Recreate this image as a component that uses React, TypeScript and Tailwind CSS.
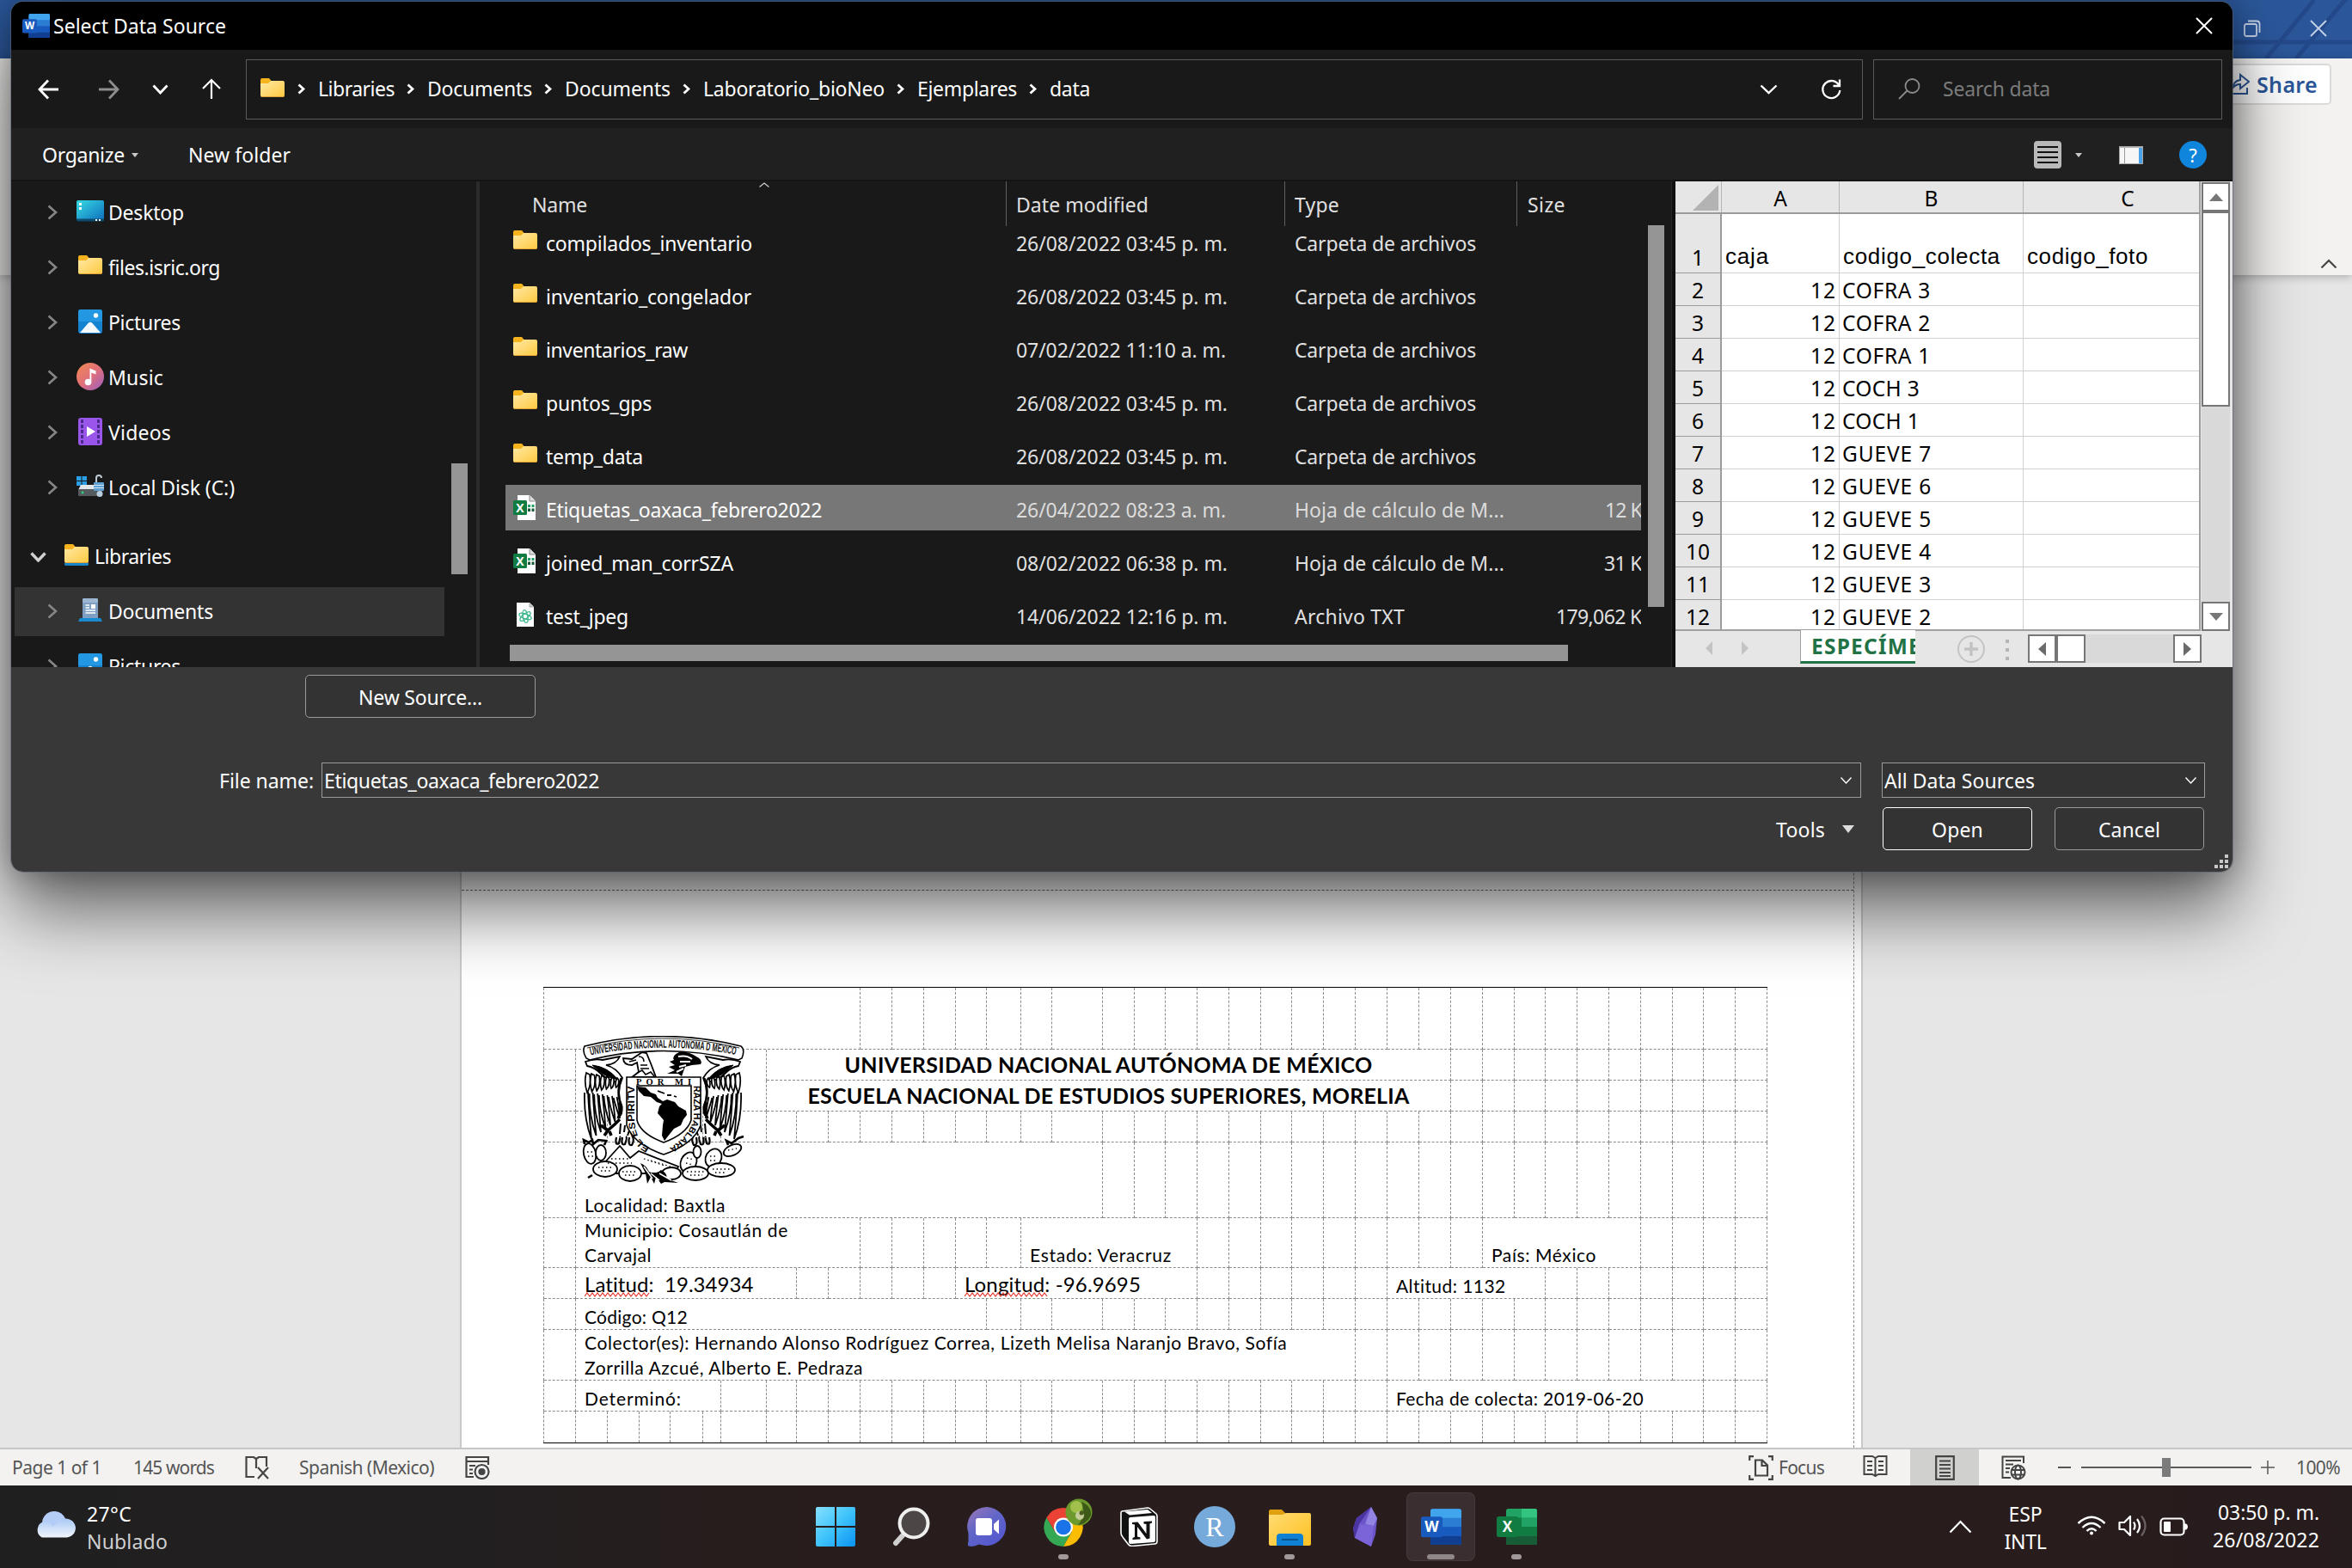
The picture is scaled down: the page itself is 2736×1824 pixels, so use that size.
import React, { useLayoutEffect, useRef, useState } from "react";

/* Text run whose tracking is adjusted so that it occupies `w` pixels. */
function Fit({ w, children, className = "" }: { w: number; children: string; className?: string }) {
  const ref = useRef<HTMLSpanElement>(null);
  const [ls, setLs] = useState(0);
  useLayoutEffect(() => {
    const el = ref.current;
    if (!el) return;
    setLs((w + 2 - el.getBoundingClientRect().width) / children.length);
  }, [w, children]);
  return (
    <span ref={ref} style={{ letterSpacing: ls }} className={"inline-block shrink-0 whitespace-pre " + className}>
      {children}
    </span>
  );
}

/* ---------- small icons ---------- */
const Chevron = ({ d, w, h, sw = 2.4, className = "" }: { d: "r" | "d" | "u"; w: number; h: number; sw?: number; className?: string }) => {
  const p = d === "r" ? `M1.5 1.5L${w - 2} ${h / 2}L1.5 ${h - 1.5}` : d === "d" ? `M1.5 1.5L${w / 2} ${h - 2}L${w - 1.5} 1.5` : `M1.5 ${h - 1.5}L${w / 2} 2L${w - 1.5} ${h - 1.5}`;
  return (
    <svg width={w} height={h} viewBox={`0 0 ${w} ${h}`} fill="none" stroke="currentColor" strokeWidth={sw} className={"shrink-0 " + className}>
      <path d={p} />
    </svg>
  );
};

const Folder = ({ lib = false }: { lib?: boolean }) => (
  <svg width="28" height="25" viewBox="0 0 28 25" className="shrink-0">
    <defs>
      <linearGradient id="fold" x1="0" y1="0" x2="1" y2="1">
        <stop offset="0" stopColor="#ffe9a6" />
        <stop offset="1" stopColor="#ffc93f" />
      </linearGradient>
    </defs>
    <path d="M0 2Q0 0 2 0H10L12.5 3L10 8H0Z" fill="#f5b31d" />
    <path d="M0 6H9L12 3H26Q28 3 28 5V20Q28 22 26 22H2Q0 22 0 20Z" fill="url(#fold)" />
    <path d="M1 21.5H27" stroke="#dfa431" strokeWidth="1" />
    {lib && <path d="M0 22H28V23.5Q28 25 26 25H2Q0 25 0 23.5Z" fill="#1a86c8" />}
  </svg>
);

const WordIcon = ({ s }: { s: number }) => (
  <svg width={s} height={s * 0.9} viewBox="0 0 47 42" className="shrink-0">
    <rect x="11" y="0" width="36" height="42" rx="2.5" fill="#2b7cd3" />
    <path d="M13.500 0H44.500Q47 0 47 2.500V10.500H11V2.500Q11 0 13.500 0Z" fill="#41a5ee" />
    <rect x="11" y="21" width="36" height="10.500" fill="#185abd" />
    <path d="M11 31.500H47V39.500Q47 42 44.500 42H13.500Q11 42 11 39.500Z" fill="#103f91" />
    <rect x="0" y="9" width="25" height="24" rx="2.500" fill="#185abd" />
    <text x="12.500" y="27" textAnchor="middle" fontFamily="Open Sans" fontWeight="700" fontSize="17" fill="#fff">W</text>
  </svg>
);

const ExcelIcon = () => (
  <svg width="47" height="42" viewBox="0 0 47 42">
    <rect x="11" y="0" width="36" height="42" rx="2.500" fill="#21a366" />
    <path d="M29 0H44.500Q47 0 47 2.500V10.500H29Z" fill="#33c481" />
    <rect x="29" y="10.500" width="18" height="10.500" fill="#21a366" />
    <path d="M11 10.500H29V21H11Z" fill="#107c41" />
    <path d="M11 21H47V31.500H11Z" fill="#107c41" />
    <path d="M11 31.500H47V39.500Q47 42 44.500 42H13.500Q11 42 11 39.500Z" fill="#185c37" />
    <rect x="0" y="9" width="25" height="24" rx="2.500" fill="#107c41" />
    <text x="12.500" y="27" textAnchor="middle" fontFamily="Open Sans" fontWeight="700" fontSize="17" fill="#fff">X</text>
  </svg>
);

const ExcelFile = () => (
  <svg width="28" height="30" viewBox="0 0 28 30" className="shrink-0">
    <path d="M5 0H19L26 7V29H5Z" fill="#fff" />
    <path d="M19 0V7H26" fill="#ddd" stroke="#8a8a8a" strokeWidth="1" />
    <path d="M17 11h3v3h-3zM21.500 11h3v3h-3z" fill="#21a366" />
    <path d="M17 15.500h3v3.500h-3zM21.500 15.500h3v3.500h-3z" fill="#185c37" />
    <rect x="0" y="6" width="16" height="17" rx="1.500" fill="#107c41" />
    <text x="8" y="19.500" textAnchor="middle" fontFamily="Open Sans" fontWeight="700" fontSize="14" fill="#fff">X</text>
  </svg>
);

const TxtFile = () => (
  <svg width="28" height="30" viewBox="0 0 28 30" className="shrink-0">
    <path d="M4 1H19L24 6V29H4Z" fill="#fdfdfd" />
    <path d="M19 1V6H24" fill="#ccc" stroke="#999" strokeWidth=".8" />
    <g fill="none" stroke="#3bb58c" strokeWidth="1.300">
      <ellipse cx="14" cy="17" rx="7.500" ry="2.800" transform="rotate(20 14 17)" />
      <ellipse cx="14" cy="17" rx="7.500" ry="2.800" transform="rotate(80 14 17)" />
      <ellipse cx="14" cy="17" rx="7.500" ry="2.800" transform="rotate(140 14 17)" />
    </g>
  </svg>
);

const PicturesIcon = () => (
  <svg width="28" height="28" viewBox="0 0 28 28">
    <rect width="28" height="28" rx="3" fill="#1583cf" />
    <path d="M0 3Q0 0 3 0H25Q28 0 28 3V14H0Z" fill="#2497e2" />
    <circle cx="20.500" cy="7" r="2.700" fill="#fff" />
    <path d="M2 27L12 15.500Q14 14 16 15.500L26 27Z" fill="#f4faff" />
  </svg>
);

const treeIcons: Record<string, React.ReactNode> = {
  desktop: (
    <svg width="32" height="25" viewBox="0 0 32 25">
      <defs>
        <linearGradient id="dk" x1="0" y1="0" x2="1" y2="1">
          <stop offset="0" stopColor="#35dbe2" />
          <stop offset="1" stopColor="#0f6cbd" />
        </linearGradient>
      </defs>
      <rect width="32" height="24" rx="2" fill="url(#dk)" />
      <path d="M0 21.500H32V22.500Q32 24.500 30 24.500H2Q0 24.500 0 22.500Z" fill="#0c4a6e" />
      <path d="M3 3h3v3h-3zM3 8h3v3h-3zM22 22h2v2h-2zM26 22h2v2h-2z" fill="#fff" />
    </svg>
  ),
  folder: <Folder />,
  pictures: <PicturesIcon />,
  music: (
    <svg width="32" height="32" viewBox="0 0 32 32">
      <defs>
        <linearGradient id="mu" x1="0" y1="0" x2="1" y2="1">
          <stop offset="0" stopColor="#f2894f" />
          <stop offset=".5" stopColor="#e0707a" />
          <stop offset="1" stopColor="#9a5fc4" />
        </linearGradient>
      </defs>
      <circle cx="16" cy="16" r="16" fill="url(#mu)" />
      <circle cx="13.500" cy="22.500" r="3.800" fill="#fff" />
      <path d="M15.500 22.500V6.500L22.500 9.500V13.500L17.300 11.500V22.500Z" fill="#fff" />
    </svg>
  ),
  videos: (
    <svg width="28" height="32" viewBox="0 0 28 32">
      <rect width="28" height="32" rx="3" fill="#9a55ea" />
      <path d="M3 2h3v4H3zM3 8h3v4H3zM3 14h3v4H3zM3 20h3v4H3zM3 26h3v4H3zM22 2h3v4h-3zM22 8h3v4h-3zM22 14h3v4h-3zM22 20h3v4h-3zM22 26h3v4h-3z" fill="#4b2a8c" />
      <path d="M10 10L20 16L10 22Z" fill="#fff" />
    </svg>
  ),
  disk: (
    <svg width="32" height="27" viewBox="0 0 32 27">
      <path d="M0 2h5.500v5H0zM6.500 2H12v5H6.500zM0 8h5.500v5H0zM6.500 8H12v5H6.500z" fill="#2b9fe6" />
      <path d="M5 12H27L30 18H2Z" fill="#e4e7ea" />
      <rect x="2" y="17" width="28" height="8" rx="1" fill="#555a5f" />
      <circle cx="7" cy="21" r="1.400" fill="#2ed573" />
      <path d="M23 9V4Q23 1 26 1T29 4" fill="none" stroke="#bfc9d2" strokeWidth="2" />
      <rect x="20" y="9" width="12" height="10" rx="1" fill="#5fa0cf" />
      <path d="M20 12.500H32M20 15.500H32" stroke="#cfe4f4" strokeWidth="1" />
      <circle cx="27" cy="22.500" r="3.500" fill="#b9cfdf" />
    </svg>
  ),
  lib: <Folder lib />,
  docs: (
    <svg width="28" height="27" viewBox="0 0 28 27">
      <rect x="5" y="0" width="18" height="25" rx="1.500" fill="#7f9fc2" />
      <rect x="5" y="0" width="18" height="5" rx="1.500" fill="#9db6d1" />
      <path d="M8.500 8H13M8.500 11H13M8.500 14H20M8.500 17H20" stroke="#fff" strokeWidth="1.400" />
      <rect x="15" y="7" width="5" height="5" fill="#fff" />
      <path d="M2 23H26L28 27H0Z" fill="#1a8ad0" />
    </svg>
  ),
};

const tree: { t: string; w: number; i: string; top?: boolean; sel?: boolean }[] = [
  { t: "Desktop", w: 86, i: "desktop" },
  { t: "files.isric.org", w: 128, i: "folder" },
  { t: "Pictures", w: 82, i: "pictures" },
  { t: "Music", w: 62, i: "music" },
  { t: "Videos", w: 71, i: "videos" },
  { t: "Local Disk (C:)", w: 145, i: "disk" },
  { t: "Libraries", w: 87, i: "lib", top: true },
  { t: "Documents", w: 120, i: "docs", sel: true },
  { t: "Pictures", w: 82, i: "pictures" },
];

const files = [
  { n: "compilados_inventario", w: 238, d: "26/08/2022 03:45 p. m.", t: "Carpeta de archivos", tw: 209, s: "", k: "f" },
  { n: "inventario_congelador", w: 237, d: "26/08/2022 03:45 p. m.", t: "Carpeta de archivos", tw: 209, s: "", k: "f" },
  { n: "inventarios_raw", w: 163, d: "07/02/2022 11:10 a. m.", t: "Carpeta de archivos", tw: 209, s: "", k: "f" },
  { n: "puntos_gps", w: 121, d: "26/08/2022 03:45 p. m.", t: "Carpeta de archivos", tw: 209, s: "", k: "f" },
  { n: "temp_data", w: 111, d: "26/08/2022 03:45 p. m.", t: "Carpeta de archivos", tw: 209, s: "", k: "f" },
  { n: "Etiquetas_oaxaca_febrero2022", w: 319, d: "26/04/2022 08:23 a. m.", t: "Hoja de cálculo de M...", tw: 242, s: "12 KB", sw: 55, k: "x", sel: true },
  { n: "joined_man_corrSZA", w: 216, d: "08/02/2022 06:38 p. m.", t: "Hoja de cálculo de M...", tw: 242, s: "31 KB", sw: 56, k: "x" },
  { n: "test_jpeg", w: 94, d: "14/06/2022 12:16 p. m.", t: "Archivo TXT", tw: 126, s: "179,062 KB", sw: 112, k: "t" },
];

const crumbs: [string, number][] = [
  ["Libraries", 88],
  ["Documents", 121],
  ["Documents", 122],
  ["Laboratorio_bioNeo", 210],
  ["Ejemplares", 115],
  ["data", 46],
];

const sheet: [string, number][] = [
  ["COFRA 3", 101],
  ["COFRA 2", 101],
  ["COFRA 1", 101],
  ["COCH 3", 88],
  ["COCH 1", 88],
  ["GUEVE 7", 102],
  ["GUEVE 6", 102],
  ["GUEVE 5", 102],
  ["GUEVE 4", 102],
  ["GUEVE 3", 102],
  ["GUEVE 2", 102],
];

const Tri = ({ d, w, h, className = "" }: { d: "u" | "d" | "l" | "r"; w: number; h: number; className?: string }) => {
  const p = { u: `M0 ${h}H${w}L${w / 2} 0Z`, d: `M0 0H${w}L${w / 2} ${h}Z`, l: `M${w} 0V${h}L0 ${h / 2}Z`, r: `M0 0V${h}L${w} ${h / 2}Z` }[d];
  return (
    <svg width={w} height={h} viewBox={`0 0 ${w} ${h}`} className={"shrink-0 " + className}>
      <path d={p} fill="currentColor" />
    </svg>
  );
};

/* ---------- spreadsheet preview ---------- */
function SheetPreview() {
  return (
    <div className="w-[648px] shrink-0 bg-[#e6e6e6] text-black flex flex-col text-[24.500px]">
      <div className="flex h-[523px]">
        <div className="w-[611px] shrink-0 flex flex-col overflow-hidden border-r-2 border-b-2 border-[#a0a0a0] bg-white leading-none">
          <div className="flex h-[38px] shrink-0 bg-[#e6e6e6] border-b-2 border-[#9b9b9b]">
            <div className="w-[54px] shrink-0 border-r border-[#b5b5b5] flex justify-end items-end pr-[3px] pb-[2px]">
              <svg width="30" height="30" viewBox="0 0 30 30"><path d="M30 0V30H0Z" fill="#b3b3b3" /></svg>
            </div>
            <div className="w-[137px] shrink-0 border-r border-[#b5b5b5] flex items-center justify-center pt-1">A</div>
            <div className="w-[214px] shrink-0 border-r border-[#b5b5b5] flex items-center justify-center pt-1">B</div>
            <div className="w-[242px] shrink-0 flex items-center justify-center pt-1">C</div>
          </div>
          <div className="flex h-[69px] shrink-0">
            <div className="w-[54px] shrink-0 bg-[#e6e6e6] border-r-2 border-b border-[#9b9b9b] flex items-end justify-center pb-[4px] leading-[26px]">1</div>
            <div className="w-[137px] shrink-0 border-r border-b border-[#d0d0d0] pl-[4px] flex items-end pb-[5px] leading-[28px] text-[26px] font-['Liberation_Sans']"><Fit w={49}>caja</Fit></div>
            <div className="w-[214px] shrink-0 border-r border-b border-[#d0d0d0] pl-[4px] flex items-end pb-[5px] leading-[28px] text-[26px] font-['Liberation_Sans']"><Fit w={181}>codigo_colecta</Fit></div>
            <div className="flex-1 border-b border-[#d0d0d0] pl-[4px] flex items-end pb-[5px] leading-[28px] text-[26px] font-['Liberation_Sans']"><Fit w={139}>codigo_foto</Fit></div>
          </div>
          {sheet.map(([t, w], i) => (
            <div key={i} className="flex h-[38px] shrink-0 leading-none">
              <div className="w-[54px] shrink-0 bg-[#e6e6e6] border-r-2 border-b border-[#9b9b9b] flex items-center justify-center pt-1">{i + 2}</div>
              <div className="w-[137px] shrink-0 border-r border-b border-[#d0d0d0] flex items-center justify-end pr-[3px] pt-1"><Fit w={28}>12</Fit></div>
              <div className="w-[214px] shrink-0 border-r border-b border-[#d0d0d0] flex items-center pl-[3px] pt-1"><Fit w={w}>{t}</Fit></div>
              <div className="flex-1 border-b border-[#d0d0d0]" />
            </div>
          ))}
        </div>
        <div className="w-[33px] shrink-0 ml-px pt-px flex flex-col bg-[#d9d9d9]">
          <div className="h-[34px] border-2 border-[#767676] bg-white flex items-center justify-center text-[#767676]"><Tri d="u" w={16} h={9} /></div>
          <div className="h-[227px] border-2 border-[#767676] bg-white" />
          <div className="mt-auto h-[34px] border-2 border-[#767676] bg-white flex items-center justify-center text-[#767676]"><Tri d="d" w={16} h={9} /></div>
        </div>
      </div>
      <div className="flex h-[42px] pl-[35px]">
        <Tri d="l" w={8} h={16} className="text-[#c3c3c3] mt-3" />
        <Tri d="r" w={8} h={16} className="text-[#c3c3c3] mt-3 ml-[34px]" />
        <div className="ml-[60px] w-[134px] h-[39px] -mt-px shrink-0 bg-white border-l border-b-[3px] border-l-[#a0a0a0] border-b-[#217346] overflow-hidden pl-3 leading-[37px] font-bold text-[#217346]">
          <Fit w={147}>ESPECÍMEN</Fit>
        </div>
        <svg width="34" height="34" viewBox="0 0 34 34" fill="none" stroke="#c3c3c3" className="ml-[48px] mt-1 shrink-0">
          <circle cx="17" cy="17" r="15" strokeWidth="2" />
          <path d="M17 9V25M9 17H25" strokeWidth="3.500" />
        </svg>
        <div className="ml-[23px] mt-[10px] flex flex-col gap-[6px] shrink-0">
          <i className="size-1 bg-[#b5b5b5]" /><i className="size-1 bg-[#b5b5b5]" /><i className="size-1 bg-[#b5b5b5]" />
        </div>
        <div className="ml-[22px] mt-1 w-[202px] h-[33px] bg-[#d9d9d9] flex shrink-0 text-[#6a6a6a]">
          <div className="w-[33px] border-2 border-[#767676] bg-white flex items-center justify-center"><Tri d="l" w={9} h={16} /></div>
          <div className="w-[34px] border-2 border-[#767676] bg-white" />
          <div className="ml-auto w-[33px] border-2 border-[#767676] bg-white flex items-center justify-center"><Tri d="r" w={9} h={16} /></div>
        </div>
      </div>
    </div>
  );
}

/* ---------- file picker dialog ---------- */
function Dialog() {
  return (
    <div className="absolute left-[13px] top-[2px] w-[2584px] h-[1012px] rounded-[14px] shadow-[0_0_0_1px_rgba(90,100,115,0.6),0_0_36px_rgba(0,0,0,0.3),0_44px_84px_rgba(0,0,0,0.58)]">
      <div className="size-full rounded-[14px] overflow-hidden bg-[#383838] flex flex-col text-white text-[23px] leading-none">
        <div className="h-[56px] shrink-0 bg-black flex items-center pl-[13px]">
          <WordIcon s={32} />
          <Fit w={199} className="ml-[4px]">Select Data Source</Fit>
          <svg width="20" height="20" viewBox="0 0 20 20" stroke="#fff" strokeWidth="2" className="ml-auto mr-[23px]"><path d="M1 1L19 19M19 1L1 19" /></svg>
        </div>
        <div className="h-[91px] shrink-0 bg-[#191919] flex items-center pl-[31px]">
          <svg width="25" height="24" viewBox="0 0 25 24" fill="none" stroke="#fff" strokeWidth="2.800"><path d="M24 12H2M12 1.500L2 12L12 22.500" /></svg>
          <svg width="25" height="24" viewBox="0 0 25 24" fill="none" stroke="#8e8e8e" strokeWidth="2.800" className="ml-[45px]"><path d="M1 12H23M13 1.500L23 12L13 22.500" /></svg>
          <Chevron d="d" w={19} h={12} sw={2.8} className="ml-[38px]" />
          <svg width="22" height="25" viewBox="0 0 22 25" fill="none" stroke="#fff" strokeWidth="2.200" className="ml-[39px]"><path d="M11 24V2M1 12L11 2L21 12" /></svg>
          <div className="ml-[29px] w-[1881px] h-[70px] border border-[#5a5a5a] flex items-center pl-4 shrink-0">
            <Folder />
            {crumbs.map(([t, w], i) => (
              <React.Fragment key={i}>
                <Chevron d="r" w={9} h={13} sw={2.8} className={i ? "ml-[14px] mr-[15px]" : "ml-[15px] mr-[15px]"} />
                <Fit w={w - 1}>{t}</Fit>
              </React.Fragment>
            ))}
            <Chevron d="d" w={21} h={12} sw={2.4} className="ml-auto" />
            <svg width="24" height="25" viewBox="0 0 24 25" fill="none" stroke="#fff" strokeWidth="2.300" className="ml-[50px] mr-[24px]"><path d="M21.500 9A10 10 0 1 0 22.300 14M22 1.500V9H14.500" /></svg>
          </div>
          <div className="ml-3 w-[406px] h-[70px] border border-[#5a5a5a] flex items-center pl-7 text-[#7b7b7b] shrink-0">
            <svg width="26" height="25" viewBox="0 0 26 25" fill="none" stroke="#8b8b8b" strokeWidth="1.800"><circle cx="16.500" cy="9" r="8" /><path d="M10.500 14.500L1 24" /></svg>
            <Fit w={123} className="ml-[26px]">Search data</Fit>
          </div>
        </div>
        <div className="h-[62px] shrink-0 bg-[#202020] border-b-2 border-[#151515] flex items-center pl-9 pt-[2px]">
          <Fit w={94}>Organize</Fit>
          <Tri d="d" w={8} h={5} className="ml-[8px] text-[#c8c8c8]" />
          <Fit w={117} className="ml-[58px]">New folder</Fit>
          <svg width="32" height="32" viewBox="0 0 32 32" className="ml-auto"><rect width="32" height="32" rx="4" fill="#b9b9b9" /><path d="M4 7H28M4 13H28M4 19H28M4 25H28" stroke="#111" strokeWidth="2.200" /></svg>
          <Tri d="d" w={8} h={5} className="ml-[16px] text-[#c8c8c8]" />
          <svg width="28" height="21" viewBox="0 0 28 21" className="ml-[43px]"><rect width="28" height="21" fill="#f6f6f6" /><path d="M0 0H28V2H0Z" fill="#b5b5b5" /><path d="M6.500 2V21" stroke="#9a9a9a" /><rect x="23" y="2" width="5" height="19" fill="#4aa3e8" /><path d="M.5 .5H27.500V20.500H.5Z" fill="none" stroke="#a9a9a9" /></svg>
          <div className="ml-[42px] mr-[30px] size-8 rounded-full bg-[#0f85dc] flex items-center justify-center text-[22px]">?</div>
        </div>
        <div className="h-[565px] shrink-0 flex bg-[#191919]">
          <div className="w-[545px] shrink-0 border-r-4 border-[#2b2b2b] overflow-hidden flex pl-1">
            <div className="w-[500px] shrink-0 pt-[5px] h-[565px] overflow-hidden">
              {tree.map((r, i) => (
                <div key={i} className={"h-16 pt-[3px] " + (r.top ? "mt-4" : "")}>
                  <div className={"h-[57px] flex items-center " + (r.sel ? "bg-[#333333]" : "")}>
                    {r.top ? (
                      <Chevron d="d" w={19} h={12} sw={3.4} className="ml-[18px] text-[#d0d0d0]" />
                    ) : (
                      <Chevron d="r" w={12} h={18} sw={2.6} className="ml-[38px] -mt-[2px] text-[#868686]" />
                    )}
                    <div className={"w-8 flex justify-center -mt-1 shrink-0 " + (r.top ? "ml-[19px]" : "ml-[22px]")}>{treeIcons[r.i]}</div>
                    <Fit w={r.w} className="ml-[5px]">{r.t}</Fit>
                  </div>
                </div>
              ))}
            </div>
            <div className="ml-2 mt-[328px] w-[19px] h-[129px] bg-[#959595]" />
          </div>
          <div className="w-[1386px] flex shrink-0">
            <div className="w-[1351px] shrink-0 pl-[30px] flex flex-col">
              <div className="h-[52px] flex shrink-0 text-[#e0e0e0] relative z-10 bg-[#191919]">
                <div className="w-[583px] flex items-center pl-[31px] border-r border-[#5f5f5f] pt-[2px] relative">
                  <Fit w={62}>Name</Fit>
                  <Chevron d="u" w={14} h={8} sw={1.2} className="absolute left-[294px] top-0 text-[#cfcfcf]" />
                </div>
                <div className="w-[324px] flex items-center pl-[11px] border-r border-[#5f5f5f] pt-[2px]"><Fit w={152}>Date modified</Fit></div>
                <div className="w-[270px] flex items-center pl-[11px] border-r border-[#5f5f5f] pt-[2px]"><Fit w={50}>Type</Fit></div>
                <div className="flex items-center pl-[12px] pt-[2px]"><Fit w={42}>Size</Fit></div>
              </div>
              <div className="h-[479px] overflow-hidden shrink-0">
                <div className="-mt-[11px] w-[1321px]">
                  {files.map((f, i) => (
                    <div key={i} className="h-[62px] pt-[2px]">
                      <div className={"h-[53px] flex items-center overflow-hidden pt-[5px] " + (f.sel ? "bg-[#777777] text-[#dcdcdc]" : "text-[#e0e0e0]")}>
                        <div className="ml-[9px] w-7 -mt-[5px] shrink-0">{f.k === "f" ? <Folder /> : f.k === "x" ? <ExcelFile /> : <TxtFile />}</div>
                        <div className="w-[556px] shrink-0 pl-[10px] text-white"><Fit w={f.w}>{f.n}</Fit></div>
                        <div className="w-[324px] shrink-0 pl-[1px]"><Fit w={f.d.includes("a.") ? 242 : 244}>{f.d}</Fit></div>
                        <div className="w-[270px] shrink-0 pl-[1px]"><Fit w={f.tw}>{f.t}</Fit></div>
                        <div className="w-[149px] shrink-0 flex justify-end">{f.s && <Fit w={f.sw!}>{f.s}</Fit>}</div>
                      </div>
                    </div>
                  ))}
                </div>
              </div>
              <div className="h-[19px] shrink-0 mt-[8px] ml-[5px] w-[1231px] bg-[#959595]" />
            </div>
            <div className="mt-[51px] ml-[8px] w-[19px] h-[444px] bg-[#959595]" />
          </div>
          <div className="w-[5px] bg-[#101010] shrink-0 border-l border-[#262626]" />
          <SheetPreview />
        </div>
        <div className="flex-1 flex flex-col">
          <div className="ml-[342px] mt-[9px] w-[268px] h-[50px] shrink-0 rounded-[5px] border-[1.500px] border-[#9a9a9a] bg-[#333] flex items-center justify-center pt-[2px]"><Fit w={142}>New Source...</Fit></div>
          <div className="mt-[52px] flex items-center h-[41px] shrink-0">
            <Fit w={108} className="ml-[242px] mt-[2px]">File name:</Fit>
            <div className="ml-[9px] w-[1791px] h-[41px] border border-[#9b9b9b] flex items-center pl-[2px] pr-[9px]">
              <Fit w={318} className="mt-[2px]">Etiquetas_oaxaca_febrero2022</Fit>
              <Chevron d="d" w={15} h={10} sw={1.4} className="ml-auto" />
            </div>
            <div className="ml-[24px] w-[376px] h-[41px] border border-[#9b9b9b] bg-[#333] flex items-center pl-[2px] pr-[8px]">
              <Fit w={173} className="mt-[2px]">All Data Sources</Fit>
              <Chevron d="d" w={15} h={10} sw={1.4} className="ml-auto" />
            </div>
          </div>
          <div className="mt-[11px] flex items-center h-[50px] shrink-0 pl-[2053px]">
            <Fit w={55} className="mt-[3px]">Tools</Fit>
            <Tri d="d" w={14} h={9} className="ml-[20px] text-[#dcdcdc]" />
            <div className="ml-[33px] w-[174px] h-[50px] shrink-0 rounded-[5px] border-[1.500px] border-white bg-[#333] flex items-center justify-center pt-[2px]"><Fit w={58}>Open</Fit></div>
            <div className="ml-[26px] w-[174px] h-[50px] shrink-0 rounded-[5px] border border-[#9b9b9b] bg-[#333] flex items-center justify-center pt-[2px]"><Fit w={70}>Cancel</Fit></div>
          </div>
          <svg width="17" height="17" viewBox="0 0 17 17" className="ml-auto mr-1 mt-[5px]" fill="#c8c8c8"><path d="M12 0h4v4h-4zM12 6h4v4h-4zM6 6h4v4H6zM12 12h4v4h-4zM6 12h4v4H6zM0 12h4v4H0z" /></svg>
        </div>
      </div>
    </div>
  );
}

/* ---------- document ---------- */
const X = [632, 669, 706, 743, 779, 817, 838, 891, 926, 963, 1000, 1037, 1074, 1111, 1147, 1187, 1223, 1282, 1319, 1355, 1392, 1429, 1466, 1502, 1539, 1576, 1613, 1650, 1687, 1724, 1761, 1797, 1834, 1871, 1908, 1945, 1981, 2018, 2055];

type Span = { a: number; b: number; c?: React.ReactNode; open?: boolean; mid?: boolean };
const rows: { h: number; s: Span[] }[] = [
  { h: 72, s: [{ a: 0, b: 10 }] },
  { h: 36, s: [{ a: 1, b: 7, open: true }, { a: 7, b: 28, mid: true, c: <Fit w={612}>UNIVERSIDAD NACIONAL AUTÓNOMA DE MÉXICO</Fit> }] },
  { h: 36, s: [{ a: 1, b: 7 }, { a: 7, b: 28, mid: true, c: <Fit w={698}>ESCUELA NACIONAL DE ESTUDIOS SUPERIORES, MORELIA</Fit> }] },
  { h: 36, s: [] },
  { h: 88, s: [{ a: 1, b: 17, c: <Fit w={162}>Localidad: Baxtla</Fit> }] },
  {
    h: 58,
    s: [
      { a: 1, b: 10, c: <div className="flex flex-col items-start"><Fit w={235}>Municipio: Cosautlán de</Fit><Fit w={76}>Carvajal</Fit></div> },
      { a: 15, b: 20, c: <Fit w={163}>Estado: Veracruz</Fit> },
      { a: 29, b: 34, c: <Fit w={120}>País: México</Fit> },
    ],
  },
  {
    h: 36,
    s: [
      { a: 1, b: 8, c: <div className="text-[24px] flex relative mb-[2px]"><Fit w={195}>{"Latitud:  19.34934"}</Fit><Wave w={77} /></div> },
      { a: 13, b: 20, c: <div className="text-[24px] flex relative mb-[2px]"><Fit w={203}>Longitud: -96.9695</Fit><Wave w={97} /></div> },
      { a: 26, b: 31, c: <Fit w={126}>Altitud: 1132</Fit> },
    ],
  },
  { h: 36, s: [{ a: 1, b: 14, c: <Fit w={118}>Código: Q12</Fit> }] },
  { h: 59, s: [{ a: 1, b: 25, c: <div className="flex flex-col items-start"><Fit w={815}>Colector(es): Hernando Alonso Rodríguez Correa, Lizeth Melisa Naranjo Bravo, Sofía</Fit><Fit w={322}>Zorrilla Azcué, Alberto E. Pedraza</Fit></div> }] },
  { h: 36, s: [{ a: 1, b: 6, c: <Fit w={111}>Determinó:</Fit> }, { a: 26, b: 36, c: <Fit w={286}>Fecha de colecta: 2019-06-20</Fit> }] },
  { h: 36, s: [] },
];

function Wave({ w }: { w: number }) {
  let d = "M0 5";
  for (let x = 3; x <= w; x += 3) d += `L${x} ${(x / 3) % 2 ? 1 : 5}`;
  return (
    <svg width={w} height="6" viewBox={`0 0 ${w} 6`} fill="none" stroke="#e2372e" strokeWidth="1.200" className="absolute left-0 -bottom-px">
      <path d={d} />
    </svg>
  );
}

function LabelTable() {
  return (
    <div className="w-[1424px] border-y border-black text-black font-['Lato',sans-serif]">
      {rows.map((r, ri) => {
        const cells: Span[] = [];
        for (let i = 0; i < X.length - 1; ) {
          const s = r.s.find((q) => q.a === i);
          cells.push(s ?? { a: i, b: i + 1 });
          i = s ? s.b : i + 1;
        }
        return (
          <div key={ri} className="flex border-l border-dashed border-[#8c8c8c]" style={{ height: r.h }}>
            {cells.map((c) => (
              <div
                key={c.a}
                style={{ width: X[c.b] - X[c.a] }}
                className={"shrink-0 border-r border-dashed border-[#8c8c8c] flex " + (ri < 10 && !c.open ? "border-b " : "") + (c.mid ? "items-center justify-center font-bold text-[25px] leading-none" : "items-end pl-[10px] text-[21px] leading-[29px]")}
              >
                {c.c}
              </div>
            ))}
          </div>
        );
      })}
    </div>
  );
}

/* University coat of arms */
function Crest() {
  const feathers = [0, 1, 2, 3, 4, 5, 6];
  const half = (
    <g stroke="#000" fill="none">
      <path d="M4 30Q14 26 24 28L44 24Q40 33 28 34Q40 37 47 49L44 54Q30 52 22 44Q14 36 6 35Z" fill="#fff" strokeWidth="1.800" />
      <path d="M12 34Q30 36 42 51Q28 48 20 41Z" fill="#000" />
      {feathers.map((i) => (
        <path key={i} d={`M${5 + i * 6} ${43 + i}Q${2 + i * 6} ${54} ${6 + i * 5.6} ${66 - i}Q${11 + i * 5.4} ${58} ${9 + i * 5.6} ${45 + i}Z`} strokeWidth="1.700" fill="#fff" />
      ))}
      {feathers.map((i) => (
        <path key={"b" + i} d={`M${3 + i * 5.6} ${66 + i}Q${2 + i * 6} ${96 - i * 3} ${11 + i * 5.5} ${120 - i * 4}Q${8 + i * 6} ${88} ${7 + i * 5.6} ${65 + i}`} strokeWidth="1.800" />
      ))}
      <path d="M47 50Q40 66 47 82Q48 94 41 96Q46 84 42 70Q41 58 45 49Z" fill="#000" />
      <path d="M22 104L30 110L26 116M30 110L38 103L44 97M32 111L34 116" strokeWidth="3.500" />
      <path d="M40 118Q38 128 43 125Q45 116 44 118M47 118Q45 128 50 126Q53 118 51 117M55 118Q53 128 58 127Q61 122 59 117" strokeWidth="2.200" />
      <path d="M45 102L44 114M50 104L49 112M55 110L53 116" strokeWidth="2" />
    </g>
  );
  return (
    <svg width="190" height="174" viewBox="0 0 190 174" className="block">
      <rect x="3" y="20" width="183" height="68" fill="#fff" />
      {half}
      <g transform="translate(188 0) scale(-1 1)">{half}</g>
      {/* bird heads */}
      <path d="M70 19L58 27L48 26Q48 34 58 34L64 31L66 42L58 48H86L80 32L75 20Z" fill="#fff" stroke="#000" strokeWidth="1.800" />
      <path d="M55 30L63 28M66 24Q72 24 72 30M68 34H76M68 38H78M64 43L70 40L74 45L80 42L84 47" stroke="#000" strokeWidth="1.600" fill="none" />
      <path d="M113 19Q104 23 107 28L102 30L108 34L101 36L108 40L99 44H112L116 47L120 36L128 34L138 33Q141 28 133 24Q124 18 113 19Z" fill="#000" />
      <path d="M112 24Q122 22 128 27M114 30L126 30M113 36L121 34M110 42L118 38" stroke="#fff" strokeWidth="2" fill="none" />
      {/* banner */}
      <path d="M3 12Q94 -11 185 12Q190 16 186 26L182 28Q94 7 9 28L5 26Q0 18 3 12Z" fill="#fff" stroke="#000" strokeWidth="1.600" />
      <path d="M6 14Q94 -8 183 14" stroke="#000" strokeWidth=".8" fill="none" />
      <path id="arc" d="M10 22.500Q94 5 181 22.500" fill="none" />
      <text fontFamily="Liberation Sans" fontSize="13" fontWeight="700" fill="#111"><textPath href="#arc" textLength="170" lengthAdjust="spacingAndGlyphs">UNIVERSIDAD NACIONAL AUTONOMA D MEXICO</textPath></text>
      {/* shield */}
      <path d="M52 48H138V104Q130 126 95 138Q60 126 52 104Z" fill="#fff" stroke="#000" strokeWidth="1.600" />
      <path d="M64 58H127V98Q122 114 95 124Q68 114 64 98Z" fill="#fff" stroke="#000" strokeWidth="1.600" />
      <text x="95" y="56.500" textAnchor="middle" textLength="64" fontFamily="Liberation Serif" fontWeight="700" fontSize="10.500">POR MI</text>
      <path id="sl" d="M79 130Q62 121 61.500 100V54" fill="none" />
      <path id="sr" d="M129.500 58V98Q124 118 96 134" fill="none" />
      <text fontFamily="Liberation Sans" fontWeight="700" fontSize="10.500"><textPath href="#sl" textLength="78" lengthAdjust="spacingAndGlyphs">EL ESPIRITV</textPath></text>
      <text fontFamily="Liberation Sans" fontWeight="700" fontSize="10" transform="translate(0 0)"><textPath href="#sr" textLength="84" lengthAdjust="spacingAndGlyphs">RAZA HABLARA</textPath></text>
      {/* map */}
      <path d="M64 59L74 60L80 66L86 68L88 72L94 76L99 74L108 77L112 82L121 87L122 92L118 97L115 104L107 108L103 113L99 118L96 122L93 116L94 104L95 98L88 90L90 82L93 79L87 77L80 71L72 70L66 64Z" fill="#000" />
      <path d="M88 64L96 67M99 69L104 69M107 70L110 71" stroke="#000" strokeWidth="1.800" />
      {/* cactus and mountains */}
      <g fill="#fff" stroke="#000" strokeWidth="1.800">
        <path d="M24 150L44 128L56 142L66 134L112 152L108 160H24Z" />
        <ellipse cx="9" cy="137" rx="7" ry="12" transform="rotate(-12 9 137)" />
        <ellipse cx="22" cy="136" rx="6" ry="9" />
        <ellipse cx="27" cy="155" rx="14" ry="9" />
        <ellipse cx="56" cy="160" rx="13" ry="9" />
        <ellipse cx="104" cy="160" rx="11" ry="7" />
        <ellipse cx="124" cy="147" rx="9" ry="12" transform="rotate(25 124 147)" />
        <ellipse cx="134" cy="135" rx="4.500" ry="7" />
        <ellipse cx="132" cy="160" rx="15" ry="8" />
        <ellipse cx="153" cy="142" rx="9" ry="11" transform="rotate(30 153 142)" />
        <ellipse cx="162" cy="156" rx="16" ry="8" />
        <ellipse cx="175" cy="133" rx="11" ry="6" transform="rotate(-25 175 133)" />
        <path d="M3 126L2 121L8 124L12 121L13 126L19 121L28 122L26 127M12 162L7 165M170 127L168 122L174 125L182 119L188 117" fill="none" strokeWidth="2.600" />
      </g>
      <g stroke="#000" strokeWidth="1.300" strokeDasharray="1.500 3" fill="none">
        <path d="M34 143H56M30 148H58M80 145L106 153M72 143L96 151M19 153H36M22 157H34M47 158H64M50 162H62M122 142L130 144M121 148L129 150M122 158H142M126 162H140M152 155H172M155 159H168M149 140H158M149 145H156M170 133L180 131M6 135H12M7 140H13" />
      </g>
      <path d="M68 148Q74 150 78 158Q86 162 92 156Q100 160 98 166L112 171L96 170L92 172L86 164L84 172L80 164L76 172L74 160Z" fill="#000" />
      <path d="M72 152L82 166M90 160L104 168M80 160L90 168" stroke="#fff" strokeWidth="1.500" />
    </svg>
  );
}

/* ---------- taskbar ---------- */
function Slot({ w, children, dot }: { w: number; children: React.ReactNode; dot?: "s" | "l" }) {
  return (
    <div style={{ width: w }} className={"h-[80px] shrink-0 flex flex-col items-center relative rounded-lg " + (dot === "l" ? "bg-[#3a2e30] shadow-[inset_0_0_0_1px_#45393b]" : "")}>
      <div className="h-[80px] flex items-center">{children}</div>
      {dot && <i className={"absolute bottom-[2px] h-[6px] rounded-full " + (dot === "l" ? "w-8 bg-[#8f8788]" : "w-3 bg-[#a09899]")} />}
    </div>
  );
}

function Taskbar() {
  return (
    <div className="h-24 shrink-0 flex items-start pt-2 text-white text-[23px] leading-[32px] bg-[linear-gradient(90deg,#201f20_0%,#221f20_20%,#281d1d_33%,#291c1c_70%,#271c1d_100%)]">
      <svg width="48" height="31" viewBox="0 0 48 31" className="ml-10 mt-[22px] shrink-0">
        <defs>
          <linearGradient id="cl" x1="0" y1="0" x2="0" y2="1"><stop offset="0" stopColor="#a9c8f5" /><stop offset="1" stopColor="#f0f5fc" /></linearGradient>
        </defs>
        <circle cx="23" cy="14" r="14" fill="#b3cdf6" />
        <path d="M11 12A10 10 0 0 0 9 30.500H38A11 11 0 1 0 30 11Q24 14 22 18Q18 12 11 12Z" fill="url(#cl)" />
      </svg>
      <div className="ml-[13px] mt-[9px] w-[739px] flex flex-col items-start">
        <Fit w={50}>27°C</Fit>
        <Fit w={92} className="text-[#cfcfcf]">Nublado</Fit>
      </div>
      <div className="ml-[92px] flex">
        <Slot w={80}>
          <svg width="46" height="46" viewBox="0 0 46 46">
            <defs><linearGradient id="wn" x1="0" y1="0" x2="1" y2="1"><stop offset="0" stopColor="#86e0ff" /><stop offset=".5" stopColor="#3fc3fb" /><stop offset="1" stopColor="#0a93f2" /></linearGradient></defs>
            <path d="M0 2Q0 0 2 0H22V22H0ZM24 0H44Q46 0 46 2V22H24ZM0 24H22V46H2Q0 46 0 44ZM24 24H46V44Q46 46 44 46H24Z" fill="url(#wn)" />
          </svg>
        </Slot>
        <Slot w={96}>
          <svg width="44" height="46" viewBox="0 0 44 46" fill="none">
            <path d="M13 32L4 42" stroke="#cfcfcf" strokeWidth="6" strokeLinecap="round" />
            <circle cx="25" cy="19" r="16.500" fill="#4d4647" stroke="#efefef" strokeWidth="4" />
          </svg>
        </Slot>
        <Slot w={80}>
          <svg width="46" height="46" viewBox="0 0 46 46">
            <defs><linearGradient id="ch" x1="0" y1="0" x2=".7" y2="1"><stop offset="0" stopColor="#9d77b6" /><stop offset=".5" stopColor="#6066c8" /><stop offset="1" stopColor="#5557cf" /></linearGradient></defs>
            <path d="M23 0A23 22.500 0 1 1 14 43.500Q7 47 2 45.500Q0 45 1.500 40V30A23 22.500 0 0 1 23 0Z" fill="url(#ch)" />
            <rect x="10" y="13" width="19" height="20" rx="3" fill="#fff" />
            <path d="M31 20L37 14.500V31.500L31 26Z" fill="#fff" />
          </svg>
        </Slot>
        <Slot w={98} dot="s">
          <svg width="58" height="56" viewBox="0 0 58 56" className="-mt-[11px] ml-[12px]">
            <g transform="translate(0 11)">
              <path d="M23 22.500L3.500 11.250A22.500 22.500 0 0 1 42.500 11.250Z" fill="#ea4335" />
              <path d="M3.500 11.250A22.500 22.500 0 0 0 23 45L32.700 28L23 22.500L13.300 28Z" fill="#34a853" />
              <path d="M42.500 11.250A22.500 22.500 0 0 1 23 45L32.700 28L30 12Z" fill="#fbbc04" />
              <path d="M3.500 11.250L13.300 28L23 12H42.500L23 5Z" fill="#ea4335" />
              <circle cx="23" cy="22.500" r="11" fill="#fff" /><circle cx="23" cy="22.500" r="8.800" fill="#1a73e8" />
            </g>
            <circle cx="41" cy="16" r="15.500" fill="#6d9a2c" />
            <circle cx="38" cy="10" r="7" fill="#a2c04c" /><path d="M44 4Q56 9 55 20Q50 30 40 31Q50 20 44 4Z" fill="#3d5a18" /><circle cx="42" cy="20" r="5" fill="#c4cc9a" /><circle cx="44" cy="17" r="2.500" fill="#4a5a20" />
          </svg>
        </Slot>
        <Slot w={80}>
          <svg width="44" height="46" viewBox="0 0 44 46" className="-ml-[2px]">
            <path d="M2 5L32 1Q34 1 36 3L42 8Q43 9 43 11V40Q43 43 40 43L14 45.500Q11 45.500 9.500 43.500L3 35Q1 33 1 30V7Q1 5 2 5Z" fill="#111" stroke="#fff" strokeWidth="1.600" />
            <path d="M10 14Q10 12 12 12L39 10Q41 10 41 12V39Q41 41 39 41L12 43Q10 43 10 41Z" fill="#fff" />
            <path d="M5 5.500L32 3L37 7L11 9.500Z" fill="#fff" />
            <path d="M14 18L20.500 17.500L30.500 31V20L27.500 19.500V17L37 16.500V18.500L34.500 19.500V36.500L31 37.500L20 23V34.500L23.500 35.500V37.500L14.500 38V36L17 35V20.500L14 20Z" fill="#111" />
          </svg>
        </Slot>
        <Slot w={96}>
          <div className="size-12 -ml-[2px] rounded-full bg-[#75aadb] flex items-center justify-center font-['Liberation_Serif'] text-[32px]">R</div>
        </Slot>
        <div className="-ml-[2px]"><Slot w={80} dot="s">
          <svg width="49" height="43" viewBox="0 0 49 43">
            <defs><linearGradient id="ex" x1="0" y1="0" x2="1" y2="1"><stop offset="0" stopColor="#ffdc73" /><stop offset="1" stopColor="#ffc021" /></linearGradient></defs>
            <path d="M0 3Q0 1 2 1H15L20 6L15 12H0Z" fill="#e0a010" />
            <path d="M0 7H16L20 5H47Q49 5 49 7V41Q49 43 47 43H2Q0 43 0 41Z" fill="url(#ex)" />
            <path d="M9 43V33Q9 29 13 29H36Q40 29 40 33V43Z" fill="#1080d2" />
            <path d="M15 36H34" stroke="#0a5494" strokeWidth="2" />
          </svg>
        </Slot></div>
        <Slot w={96}>
          <svg width="28" height="46" viewBox="0 0 28 46">
            <path d="M21 0L28 13L26 32L21 46L2 36L0 25L4 13Z" fill="#6c55c9" />
            <path d="M21 0L4 13L0 25L2 36L7 20Z" fill="#4b35a3" />
            <path d="M21 0L28 13L24 22L14 20Z" fill="#9384e4" />
            <path d="M2 36L21 46L24 22L8 20Z" fill="#7a64d8" />
          </svg>
        </Slot>
        <Slot w={80} dot="l"><WordIcon s={47} /></Slot>
        <div className="ml-2"><Slot w={80} dot="s"><ExcelIcon /></Slot></div>
      </div>
      <div className="ml-auto flex items-start">
        <Chevron d="u" w={27} h={16} sw={2.2} className="mt-8" />
        <div className="ml-[36px] mt-[9px] w-[52px] flex flex-col items-center"><Fit w={37}>ESP</Fit><Fit w={47}>INTL</Fit></div>
        <svg width="34" height="24" viewBox="0 0 34 24" fill="none" stroke="#fff" strokeWidth="2.400" className="ml-[34px] mt-[27px]">
          <path d="M1.500 9Q17 -5.500 32.500 9M6.500 14Q17 4 27.500 14M11.500 18Q17 12.500 22.500 18" /><circle cx="17" cy="20.500" r="2" fill="#fff" stroke="none" />
        </svg>
        <svg width="34" height="28" viewBox="0 0 34 28" fill="none" stroke="#fff" strokeWidth="2.200" className="ml-[14px] mt-[25px]">
          <path d="M1.500 10H7L14 3V25L7 18H1.500Z" strokeLinejoin="round" /><path d="M18 9.500Q21 14 18 18.500M22 6Q28 14 22 22" /><path d="M27 2.500Q36 14 27 25.500" stroke="#6b6163" />
        </svg>
        <svg width="34" height="22" viewBox="0 0 34 22" fill="none" stroke="#fff" strokeWidth="2.200" className="ml-[14px] mt-[29px]">
          <rect x="1.500" y="1.500" width="27" height="19" rx="4" /><rect x="5" y="5" width="8" height="12" rx="1" fill="#fff" stroke="none" /><path d="M29 7.500H31Q33 8 33 11T31 14.500H29Z" fill="#fff" stroke="none" />
        </svg>
        <div className="ml-[28px] mr-[38px] mt-[7px] w-[124px] flex flex-col items-end"><Fit w={116}>03:50 p. m.</Fit><Fit w={122}>26/08/2022</Fit></div>
      </div>
    </div>
  );
}

function StatusBar() {
  return (
    <div className="h-11 shrink-0 bg-[#f3f2f1] border-t-2 border-[#c8c6c4] flex items-center text-[21px] text-[#555] leading-none">
      <Fit w={102} className="ml-[14px]">Page 1 of 1</Fit>
      <Fit w={92} className="ml-[37px]">145 words</Fit>
      <svg width="28" height="28" viewBox="0 0 28 28" fill="none" stroke="#444" strokeWidth="2.200" className="ml-[36px]"><path d="M13 4L10 2H1.500V25H11M13 4V15M13 4L16 2H25V13M15 14L27 27M27 14L15 27" /></svg>
      <Fit w={155} className="ml-[35px]">Spanish (Mexico)</Fit>
      <svg width="29" height="28" viewBox="0 0 29 28" fill="none" stroke="#444" strokeWidth="2.200" className="ml-[36px]"><path d="M10 25H1.500V2H27V11M1.500 7H27M5 12H12M5 16.500H9M5 21H9" /><circle cx="19.500" cy="19" r="8" /><circle cx="19.500" cy="19" r="3" fill="#444" /></svg>
      <div className="ml-auto flex items-center h-full">
        <svg width="29" height="29" viewBox="0 0 29 29" fill="none" stroke="#444" strokeWidth="2.200"><path d="M1.200 6V1.200H6M23 1.200H27.800V6M1.200 23V27.800H6M23 27.800H27.800V23M8 5.500H16L22 11.500V23.500H8ZM15.500 5.500V12H22" /></svg>
        <Fit w={51} className="ml-[6px]">Focus</Fit>
        <svg width="29" height="27" viewBox="0 0 29 27" fill="none" stroke="#444" strokeWidth="2" className="ml-[45px] -mt-1"><path d="M14.500 4L11 2H1.500V23H11L14.500 25L18 23H27.500V2H18ZM14.500 4V25M5 8H11M5 13H11M5 18H11M18 8H24M18 13H24M18 18H24" /></svg>
        <div className="ml-[26px] w-20 h-full bg-[#d0d0ce] flex items-center justify-center">
          <svg width="23" height="29" viewBox="0 0 23 29" fill="none" stroke="#444" strokeWidth="2.200"><path d="M1.200 1.200H21.800V27.800H1.200ZM5 6.500H18M5 11H18M5 15.500H18M5 20H18M5 24H18" /></svg>
        </div>
        <svg width="29" height="29" viewBox="0 0 29 29" fill="none" stroke="#444" strokeWidth="2" className="ml-[26px]"><path d="M11 26H1.500V1.500H26V9M5 6H23M5 10.500H14M5 15H10M5 19.500H9" /><circle cx="19.500" cy="19.500" r="8" /><ellipse cx="19.500" cy="19.500" rx="3.500" ry="8" /><path d="M12 17H27M12 22.500H27" /></svg>
        <div className="ml-[37px] w-[15px] h-[1.500px] bg-[#555]" />
        <div className="ml-[12px] w-[198px] h-[22px] flex items-center relative"><div className="h-[2px] w-full bg-[#5a5a5a]" /><div className="absolute left-[94px] w-[10px] h-[22px] bg-[#7b7b7b]" /></div>
        <svg width="16" height="16" viewBox="0 0 16 16" stroke="#555" strokeWidth="1.500" className="ml-[11px]"><path d="M8 0V16M0 8H16" /></svg>
        <Fit w={49} className="ml-[25px] mr-[14px]">100%</Fit>
      </div>
    </div>
  );
}

export default function App() {
  return (
    <div className="relative w-[2736px] h-[1824px] overflow-hidden flex flex-col bg-[#e6e6e6] font-['Noto_Sans',sans-serif]">
      <div className="h-[68px] shrink-0 bg-[#2b579a] flex items-start justify-end relative overflow-hidden">
        <svg width="180" height="68" viewBox="0 0 180 68" className="absolute right-0 top-0" fill="none" stroke="#24498a" strokeWidth="5"><path d="M0 49H180M80 68L136 0M115 68L180 -10" /></svg>
        <div className="flex gap-[57px] mt-[23px] mr-[29px] relative text-[#c5d2e6]">
          <svg width="20" height="20" viewBox="0 0 20 20" fill="none" stroke="currentColor" strokeWidth="1.800"><rect x="1" y="5" width="14" height="14" rx="2" /><path d="M5 1.500H15Q18.500 1.500 18.500 5V15" /></svg>
          <svg width="20" height="20" viewBox="0 0 20 20" stroke="currentColor" strokeWidth="1.800"><path d="M1 1L19 19M19 1L1 19" /></svg>
        </div>
      </div>
      <div className="h-[252px] shrink-0 bg-[#f3f2f1] shadow-[0_2px_10px_rgba(0,0,0,0.25)] flex flex-col items-end justify-between z-10">
        <div className="mt-[6px] mr-[24px] w-[160px] h-[48px] rounded-[5px] border-2 border-[#dcdad8] bg-white flex items-center justify-end pr-[14px] text-[#2b579a] text-[25px] font-semibold leading-none">
          <svg width="28" height="26" viewBox="0 0 28 26" fill="none" stroke="currentColor" strokeWidth="2" className="mr-[8px]"><path d="M3 10V24H25V17M8 18Q9 9 17 8V2L27 10L17 18V13Q11 13 8 18Z" /></svg>
          <Fit w={69}>Share</Fit>
        </div>
        <Chevron d="u" w={20} h={12} sw={2.2} className="mr-[17px] mb-[7px] text-[#444]" />
      </div>
      <div className="flex-1 flex pl-[535px] min-h-0">
        <div className="w-[1632px] bg-white border-x-2 border-[#c9c9c9] flex">
          <div className="w-[1620px] border-r border-dashed border-[#8c8c8c] flex flex-col shrink-0">
            <div className="h-[716px] shrink-0 border-b border-dashed border-[#6a6a6a]" />
            <div className="mt-[112px] ml-[95px] w-[1424px] relative">
              <LabelTable />
              <div className="absolute left-[45px] top-[57px]"><Crest /></div>
            </div>
          </div>
        </div>
      </div>
      <div className="relative z-20"><StatusBar /></div>
      <div className="relative z-20"><Taskbar /></div>
      <div className="absolute inset-0 z-10 pointer-events-none"><Dialog /></div>
    </div>
  );
}
